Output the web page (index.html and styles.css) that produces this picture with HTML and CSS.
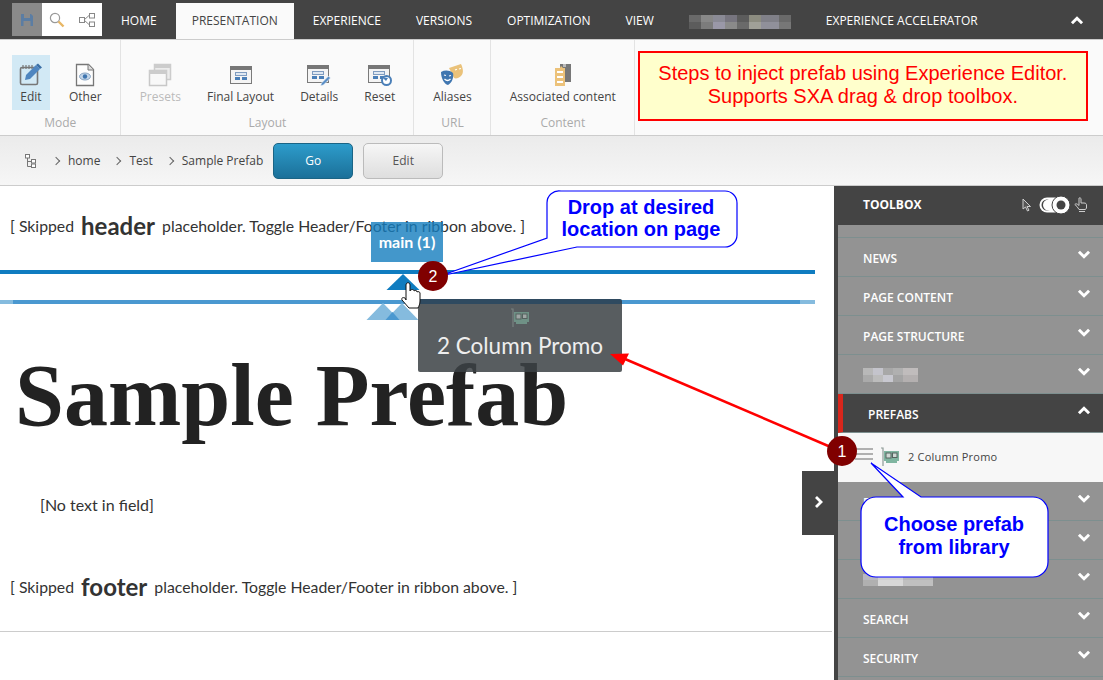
FILE: index.html
```html
<!DOCTYPE html>
<html lang="en">
<head>
  <meta charset="UTF-8">
  <title>Experience Editor</title>
  <link rel="stylesheet" href="styles.css">
</head>
<body>

  <svg class="defs" width="0" height="0">
    <symbol id="win" viewBox="0 0 22 18">
      <rect x="0.5" y="0.5" width="21" height="17" fill="#f4f4f4" stroke="#7a7a7a"/>
      <rect x="0" y="0" width="22" height="4" fill="#777"/>
      <rect x="5.5" y="6.5" width="11" height="3" fill="#dfe8f2" stroke="#7f9cc0"/>
      <rect x="5" y="11" width="5" height="3" fill="#4a7fb8"/>
      <rect x="12" y="11" width="5" height="3" fill="#4a7fb8"/>
    </symbol>
    <symbol id="card" viewBox="0 0 20 20">
      <path d="M1 1h2v18" fill="none" stroke="#8d9a96" stroke-width="1.2"/>
      <path d="M4 4h15v10h-2v2h-11v-2h-2z" fill="#7fb5a0"/>
      <rect x="6" y="6" width="5" height="5" fill="#cfd8d4" stroke="#56645f"/>
      <rect x="12.5" y="6" width="4.5" height="4.5" fill="#cfd8d4" stroke="#56645f"/>
    </symbol>
    <symbol id="chev" viewBox="0 0 12 8">
      <path d="M1.5 1.5l4.5 4.5 4.5-4.5" fill="none" stroke="#fff" stroke-width="2.6"/>
    </symbol>
  </svg>

  <div class="topbar">
    <div class="quick">
      <span class="quick-btn save">
        <svg width="12" height="12" viewBox="0 0 12 12"><path d="M0 0h10l2 2v10H0z" fill="#5b7da3"/><rect x="3" y="0" width="6" height="4" fill="#8a8a8a"/><rect x="2.500" y="7" width="7" height="5" fill="#8a8a8a"/></svg>
      </span>
      <span class="quick-btn">
        <svg width="16" height="16" viewBox="0 0 16 16"><circle cx="6" cy="6" r="4.6" fill="#fff" stroke="#999" stroke-width="1.2"/><path d="M9.500 9.500l5 5" stroke="#e8b765" stroke-width="2.400"/></svg>
      </span>
      <span class="quick-btn">
        <svg width="16" height="14" viewBox="0 0 16 14"><path d="M5 7l5-4.500M5 7l5 4.500" stroke="#888" fill="none"/><rect x="0.500" y="4.500" width="5" height="5" fill="#fff" stroke="#888"/><rect x="10.500" y="0.500" width="5" height="4.500" fill="#fff" stroke="#888"/><rect x="10.500" y="9" width="5" height="4.500" fill="#fff" stroke="#888"/></svg>
      </span>
    </div>
    <nav class="tabs">
      <a class="tab">HOME</a>
      <a class="tab active">PRESENTATION</a>
      <a class="tab">EXPERIENCE</a>
      <a class="tab">VERSIONS</a>
      <a class="tab">OPTIMIZATION</a>
      <a class="tab">VIEW</a>
      <a class="tab"><span class="blur blur-dark"></span></a>
      <a class="tab">EXPERIENCE ACCELERATOR</a>
    </nav>
    <svg class="collapse" width="14" height="9"><use href="#chev" transform="matrix(1 0 0 -1 0 9)"/></svg>
  </div>

  <div class="ribbon">
    <section class="group group-mode">
      <div class="items">
        <div class="item selected">
          <svg class="icon" width="24" height="24" viewBox="0 0 24 24">
            <rect x="1.500" y="4.500" width="17" height="17" rx="1.500" fill="none" stroke="#777" stroke-width="1.600"/>
            <path d="M4 2v4M7 2v4M10 2v4M13 2v4" stroke="#777" stroke-width="1.200"/>
            <path d="M17 2l4 4-10 10-5 1 1-5z" fill="#4f86c0"/>
            <path d="M17 2l2-1.500 4 4-2 1.500z" fill="#3a6ea5"/>
          </svg>
          <span>Edit</span>
        </div>
        <div class="item">
          <svg class="icon" width="20" height="24" viewBox="0 0 20 24">
            <path d="M1.500 1.500h12l5 5v16h-17z" fill="#fdfdfd" stroke="#777" stroke-width="1.300"/>
            <path d="M13 1.500v5.500h5.500" fill="#ddd" stroke="#777"/>
            <ellipse cx="10" cy="13.500" rx="5.500" ry="3.500" fill="#c3d5e8" stroke="#8aa6c4"/>
            <circle cx="10" cy="13.500" r="2.200" fill="#3f76b0"/>
          </svg>
          <span>Other</span>
        </div>
      </div>
      <h3>Mode</h3>
    </section>

    <section class="group">
      <div class="items">
        <div class="item disabled">
          <svg class="icon" width="24" height="24" viewBox="0 0 24 24">
            <rect x="6.500" y="1.500" width="16" height="15" fill="#ececec" stroke="#ccc" stroke-width="1.500"/>
            <rect x="6" y="1" width="17" height="4" fill="#ccc"/>
            <rect x="1.500" y="7.500" width="17" height="15" fill="#f8f8f8" stroke="#c8c8c8" stroke-width="1.500"/>
            <rect x="1" y="7" width="18" height="4" fill="#ccc"/>
          </svg>
          <span>Presets</span>
        </div>
        <div class="item">
          <svg class="icon" width="22" height="24" viewBox="0 0 22 24"><use href="#win" y="3" width="22" height="18"/></svg>
          <span>Final Layout</span>
        </div>
        <div class="item">
          <svg class="icon" width="24" height="24" viewBox="0 0 24 24">
            <use href="#win" x="0" y="2" width="22" height="18"/>
            <path d="M21.500 13l2 2-7 7-3 1 1-3z" fill="#5a8fc6" stroke="#fff" stroke-width="0.600"/>
          </svg>
          <span>Details</span>
        </div>
        <div class="item">
          <svg class="icon" width="24" height="24" viewBox="0 0 24 24">
            <use href="#win" x="0" y="2" width="22" height="18"/>
            <circle cx="18.500" cy="17.500" r="4.500" fill="#fff" stroke="#4a7fb8" stroke-width="2"/>
            <path d="M14 14l6 1-2 3z" fill="#4a7fb8"/>
          </svg>
          <span>Reset</span>
        </div>
      </div>
      <h3>Layout</h3>
    </section>

    <section class="group">
      <div class="items">
        <div class="item">
          <svg class="icon" width="24" height="22" viewBox="0 0 24 22">
            <path d="M9 4l12-4c2 4 3 9 0 12-2 2-5 3-7 2z" fill="#eac27a"/>
            <path d="M1 8c4-2 8-2 12 1 1 4-1 10-5 12-4-1-7-7-7-13z" fill="#3f76b0"/>
            <path d="M4 11l2 .5M9 12l2-.5M4.500 15c2 2 4 2 6 0" stroke="#fff" stroke-width="1.200" fill="none"/>
            <path d="M15 6l2-.7M19 5l2-.5" stroke="#fff" stroke-width="1.200"/>
          </svg>
          <span>Aliases</span>
        </div>
      </div>
      <h3>URL</h3>
    </section>

    <section class="group">
      <div class="items">
        <div class="item">
          <svg class="icon" width="18" height="24" viewBox="0 0 18 24">
            <path d="M6 1h11v18H6z" fill="#777"/>
            <path d="M9 1h3v3H9z" fill="#bbb"/>
            <path d="M1 5h5l1-2 2 2h2v18H1z" fill="#ecc27a"/>
            <path d="M3 9h6M3 14h6M3 19h6" stroke="#fff" stroke-width="2"/>
          </svg>
          <span>Associated content</span>
        </div>
      </div>
      <h3>Content</h3>
    </section>

    <aside class="note">Steps to inject prefab using Experience Editor.<br>Supports SXA drag &amp; drop toolbox.</aside>
  </div>

  <div class="crumbs">
    <svg class="tree" width="11" height="14" viewBox="0 0 11 14"><path d="M2.500 4v8.500H6M2.500 7.500H6" fill="none" stroke="#777"/><rect x="0.500" y="0.500" width="4" height="3.500" fill="#fff" stroke="#777"/><rect x="6.500" y="5.500" width="4" height="3.500" fill="#fff" stroke="#777"/><rect x="6.500" y="10" width="4" height="3.500" fill="#fff" stroke="#777"/></svg>
    <span class="crumb">home</span>
    <span class="crumb">Test</span>
    <span class="crumb">Sample Prefab</span>
    <button class="btn btn-go">Go</button>
    <button class="btn btn-edit">Edit</button>
  </div>

  <div class="main">
    <div class="content">
      <p class="skipped">[ Skipped <b>header</b> placeholder. Toggle Header/Footer in ribbon above. ]</p>
      <div class="drop-line"></div>
      <div class="drop-line next"></div>
      <h1>Sample Prefab</h1>
      <p class="no-text">[No text in field]</p>
      <p class="skipped footer">[ Skipped <b>footer</b> placeholder. Toggle Header/Footer in ribbon above. ]</p>
      <hr>
    </div>

    <div class="toolbox">
      <div class="toolbox-head">
        <span>TOOLBOX</span>
        <div class="mode-switch">
          <svg class="pointer" width="10" height="14" viewBox="0 0 10 14"><path d="M1 1v10l2.500-2 2 4 1.500-.8-2-3.700h3.500z" fill="#555" stroke="#ccc"/></svg>
          <svg width="34" height="20" viewBox="0 0 34 20"><rect x="1.500" y="2.500" width="30" height="15" rx="7.500" fill="#fff"/><circle cx="9" cy="10" r="5.500" fill="#444"/><circle cx="10.500" cy="10" r="5.500" fill="#fff"/><circle cx="23" cy="10" r="9" fill="#fff" stroke="#444"/><circle cx="23" cy="10" r="4.500" fill="#444"/></svg>
          <svg width="13" height="15" viewBox="0 0 13 15"><path d="M5 1c1-.5 2 0 2 1v4h3c2 0 2.500 1 2.500 2v3l-1 1.500H5L3 9.500 .8 7.500c1-1 2-.8 3 0L5 8.500z" fill="#444" stroke="#ccc"/><path d="M5 14.500h6" stroke="#ccc"/></svg>
        </div>
      </div>
      <div class="acc-top"></div>
      <div class="acc-row"><span>NEWS</span><svg width="14" height="9"><use href="#chev"/></svg></div>
      <div class="acc-row"><span>PAGE CONTENT</span><svg width="14" height="9"><use href="#chev"/></svg></div>
      <div class="acc-row"><span>PAGE STRUCTURE</span><svg width="14" height="9"><use href="#chev"/></svg></div>
      <div class="acc-row"><span class="blur blur-light"></span><svg width="14" height="9"><use href="#chev"/></svg></div>
      <div class="acc-row open"><span>PREFABS</span><svg width="14" height="9"><use href="#chev" transform="matrix(1 0 0 -1 0 9)"/></svg></div>
      <div class="acc-body">
        <svg class="grip" width="18" height="14" viewBox="0 0 18 14"><path d="M0 2h18M0 7h18M0 12h18" stroke="#999" stroke-width="1.500"/></svg>
        <svg width="20" height="20"><use href="#card" width="20" height="20"/></svg>
        <span>2 Column Promo</span>
      </div>
      <div class="acc-row"><span>PROMOS</span><svg width="14" height="9"><use href="#chev"/></svg></div>
      <div class="acc-row"><svg width="14" height="9"><use href="#chev"/></svg></div>
      <div class="acc-row"><span class="blur blur-wide"></span><svg width="14" height="9"><use href="#chev"/></svg></div>
      <div class="acc-row"><span>SEARCH</span><svg width="14" height="9"><use href="#chev"/></svg></div>
      <div class="acc-row"><span>SECURITY</span><svg width="14" height="9"><use href="#chev"/></svg></div>
    </div>
  </div>

  <!-- things dragged over the page -->
  <div class="ph-tag">main (1)</div>
  <svg class="markers" width="70" height="50" viewBox="0 0 70 50">
    <path d="M20 0l16.500 16h-33z" fill="#0f7cc0"/>
    <path d="M0 29l16.500 17h-33z" fill="#85bbde"/>
    <path d="M19 29l16.500 17h-33z" fill="#85bbde"/>
    <path d="M9.500 38l7 8h-14z" fill="#4a98d0"/>
  </svg>
  <div class="drag-tip">
    <svg width="20" height="20"><use href="#card" width="20" height="20"/></svg>
    <span>2 Column Promo</span>
  </div>
  <button class="side-toggle">
    <svg width="9" height="14" viewBox="0 0 9 14"><path d="M2 2l5 5-5 5" fill="none" stroke="#fff" stroke-width="2.800"/></svg>
  </button>

  <!-- screenshot annotations -->
  <svg class="annot" width="1103" height="680" viewBox="0 0 1103 680">
    <path d="M406 294c0-3 4-3 4 0v6c1-2 4-2 4 0 1-1 3-1 3 1 1-1 3 0 3 1v8c0 3-1 5-2 7h-9l-7-8c-1-2 1-3 3-2l1 2z" fill="#fff" stroke="#111" transform="translate(0 -9)"/>
    <path d="M840 451L625 359" stroke="#f00" stroke-width="2.500"/>
    <path d="M610 354l19-.5-6 12z" fill="#f00"/>

    <path d="M561 191h164a12 12 0 0 1 12 12v32a12 12 0 0 1-12 12H577L440 276 547 238V203a12 12 0 0 1 14-12z" fill="#fff" stroke="#00f" stroke-width="1.200"/>
    <text class="callout-text" x="641" y="214">Drop at desired</text>
    <text class="callout-text" x="641" y="236">location on page</text>

    <path d="M876 497h27L871 463l50 34h112a15 15 0 0 1 15 15v50a15 15 0 0 1-15 15H876a15 15 0 0 1-15-15v-50a15 15 0 0 1 15-15z" fill="#fff" stroke="#00f" stroke-width="1.200"/>
    <text class="callout-text" x="954" y="531">Choose prefab</text>
    <text class="callout-text" x="954" y="554">from library</text>

    <circle cx="433" cy="276" r="15" fill="#800000"/>
    <text class="badge-text" x="433" y="282">2</text>
    <circle cx="842" cy="451" r="15" fill="#800000"/>
    <text class="badge-text" x="842" y="457">1</text>
  </svg>

</body>
</html>
```

FILE: styles.css
```css
* {
  box-sizing: border-box;
}

html, body {
  margin: 0;
  height: 680px;
  overflow: hidden;
}

body {
  position: relative;
  background: #fff;
  font-family: 'Open Sans', sans-serif;
  color: #333;
}

.defs {
  position: absolute;
}

/* top bar */
.topbar {
  display: flex;
  height: 40px;
  padding: 3px 0 0 12px;
  background: #444;
  border-bottom: 1px solid #ccc;
}

.quick {
  display: flex;
  width: 90px;
  height: 33px;
  background: #fff;
}

.quick-btn {
  width: 30px;
  display: flex;
  align-items: center;
  justify-content: center;
}

.save {
  background: #8a8a8a;
}

.tabs {
  display: flex;
  gap: 3px;
  margin-left: 3px;
}

.tab {
  padding: 0 16px;
  height: 36px;
  line-height: 35px;
  font-size: 12px;
  color: #fff;
  white-space: nowrap;
}

.tab.active {
  background: #fafafa;
  color: #444;
}

.collapse {
  margin: 13px 0 0 76px;
}

.blur {
  display: inline-block;
  vertical-align: middle;
  background-size: 100% 50%;
  background-repeat: no-repeat;
  background-position: 0 0, 0 100%;
}

.blur-dark {
  width: 102px;
  height: 14px;
  background-image:
    linear-gradient(90deg, #6a6a6a 0 12px, #888 12px 24px, #8a8a95 24px 36px, #77757f 36px 48px, #5c5c5c 48px 60px, #8c8c80 60px 72px, #808088 72px 90px, #6a6a6a 90px),
    linear-gradient(90deg, #5c5c5c 0 12px, #7c7c7c 12px 24px, #9a98a8 24px 36px, #8a8a8a 36px 48px, #6a6a6a 48px 60px, #a0a098 60px 72px, #90909a 72px 90px, #777 90px);
}

.blur-light {
  width: 55px;
  height: 14px;
  background-image:
    linear-gradient(90deg, #b8b8b8 0 10px, #c4c4cc 10px 20px, #a8a8a8 20px 30px, #b0b0b0 30px 40px, #c0bcbc 40px),
    linear-gradient(90deg, #aaa 0 10px, #bcbcbc 10px 20px, #c8c8d0 20px 30px, #a4a4a4 30px 40px, #b4b0b0 40px);
}

.blur-wide {
  width: 70px;
  height: 12px;
  background-image:
    linear-gradient(90deg, #b8b8c0 0 15px, #d0d0d0 15px 40px, #b8b8b8 40px),
    linear-gradient(90deg, #b0b0b0 0 15px, #d8d8d8 15px 40px, #c0c0c0 40px);
}

/* ribbon */
.ribbon {
  display: flex;
  height: 96px;
  background: #fafafa;
  border-bottom: 1px solid #ccc;
}

.group {
  display: flex;
  flex-direction: column;
  align-items: center;
  padding: 0 9px 0 10px;
  border-right: 1px solid #e3e3e3;
}

.items {
  display: flex;
  gap: 8px;
  height: 67px;
  padding-top: 15px;
}

.item {
  display: flex;
  flex-direction: column;
  align-items: center;
  height: 55px;
  padding: 8px 9px 0;
  font-size: 12px;
  color: #444;
  white-space: nowrap;
}

.item span {
  margin-top: 2px;
  line-height: 16px;
}

.item .icon {
  height: 24px;
  flex: none;
}

.item.selected {
  margin: 0 2px;
  padding: 8px 7px 0;
  background: #d2e9f5;
}

.item.disabled {
  color: #bbb;
}

.group h3 {
  margin: 8px 0 0;
  font-size: 12px;
  font-weight: 400;
  color: #aaa;
  line-height: 16px;
}

.note {
  width: 450px;
  height: 70px;
  margin: 11px 0 0 3px;
  background: #ffc;
  border: 2px solid #f00;
  color: #f00;
  font-family: 'Liberation Sans', sans-serif;
  font-size: 20px;
  line-height: 23px;
  text-align: center;
  padding-top: 9px;
}

/* breadcrumb row */
.crumbs {
  display: flex;
  align-items: center;
  height: 50px;
  padding-left: 25px;
  background: linear-gradient(#ebebeb, #f6f6f6);
  border-bottom: 1px solid #ccc;
  font-size: 12px;
  color: #444;
}

.tree {
  margin-right: 8px;
}

.crumb {
  margin-left: 9px;
  margin-right: 5px;
}

.crumb::before {
  content: "";
  display: inline-block;
  width: 5px;
  height: 5px;
  margin: 0 9px 1px 0;
  border-top: 1px solid #666;
  border-right: 1px solid #666;
  transform: rotate(45deg);
}

.btn {
  width: 80px;
  height: 36px;
  border-radius: 5px;
  font-family: inherit;
  font-size: 12px;
  margin-right: 10px;
}

.btn-go {
  margin-left: 5px;
  background: linear-gradient(#2d9ccb, #1b7099);
  border: 1px solid #1a6485;
  color: #fff;
}

.btn-edit {
  background: linear-gradient(#f6f6f6, #dedede);
  border: 1px solid #bbb;
  color: #555;
}

/* page area */
.main {
  display: flex;
  height: 494px;
}

.content {
  width: 834px;
  padding-right: 2px;
  overflow: hidden;
}

.skipped {
  margin: 26px 0 0 10px;
  height: 28px;
  line-height: 28px;
  font-family: Lato, sans-serif;
  font-size: 15.800px;
  white-space: nowrap;
}

.skipped b {
  margin: 0 3px;
  font-size: 24px;
  font-weight: 700;
  color: #333;
  vertical-align: -3px;
}

.drop-line {
  width: 815px;
  height: 4px;
  margin-top: 30px;
  background: #0f7cc0;
}

.drop-line.next {
  margin-top: 26px;
  background: linear-gradient(90deg, #85bbde 0 13px, #4a98d0 13px 800px, #85bbde 800px);
}

h1 {
  margin: 42px 0 0 15px;
  font-family: 'Liberation Serif', serif;
  font-size: 88px;
  line-height: 100px;
  font-weight: 700;
  color: #222;
  white-space: nowrap;
}

.no-text {
  margin: 49px 0 0 40px;
  font-family: Lato, sans-serif;
  font-size: 16px;
  line-height: 20px;
}

.skipped.footer {
  margin-top: 58px;
}

hr {
  margin: 30px 0 0;
  border: 0;
  border-top: 1px solid #ccc;
}

/* toolbox */
.toolbox {
  width: 269px;
  flex: none;
  border-left: 4px solid #444;
  background: #939393;
  overflow: hidden;
}

.toolbox-head {
  display: flex;
  align-items: center;
  justify-content: space-between;
  height: 39px;
  margin-left: -4px;
  padding: 0 16px 2px 29px;
  background: #444;
  color: #fff;
  font-size: 12px;
  font-weight: 700;
}

.mode-switch {
  display: flex;
  align-items: center;
  gap: 2px;
}

.pointer {
  margin-right: 4px;
}

.acc-top {
  height: 13px;
  border-bottom: 1px solid #7d8f8f;
}

.acc-row {
  display: flex;
  align-items: center;
  justify-content: space-between;
  height: 39px;
  padding: 2px 12px 0 25px;
  border-bottom: 1px solid #7d8f8f;
  color: #fff;
  font-size: 12px;
  font-weight: 600;
}

.acc-row svg {
  margin: -8px 0 0 auto;
}

.acc-row.open {
  background: #444;
  border-left: 5px solid #d9261c;
  padding-left: 25px;
}

.acc-body {
  display: flex;
  align-items: center;
  height: 49px;
  padding: 0 0 2px 17px;
  background: #f7f7f7;
  color: #444;
  font-size: 11px;
}

.grip {
  margin: -6px 7px 0 0;
}

.acc-body span {
  margin-left: 8px;
  letter-spacing: 0.2px;
}

/* overlays */
.ph-tag {
  position: absolute;
  left: 371px;
  top: 222px;
  width: 72px;
  height: 40px;
  background: rgba(20, 125, 190, 0.8);
  color: #fff;
  font-family: Lato, sans-serif;
  font-size: 16px;
  font-weight: 700;
  line-height: 40px;
  text-align: center;
}

.markers {
  position: absolute;
  left: 383px;
  top: 274px;
  overflow: visible;
}

.drag-tip {
  position: absolute;
  left: 418px;
  top: 299px;
  width: 204px;
  height: 73px;
  display: flex;
  flex-direction: column;
  align-items: center;
  padding-top: 7px;
  background: rgba(60, 66, 70, 0.86);
  border-top: 5px solid #2f4a60;
  border-radius: 2px;
  color: #eee;
  font-family: Lato, sans-serif;
  font-size: 22.500px;
}

.drag-tip svg {
  opacity: 0.6;
  margin-top: -3px;
}

.drag-tip span {
  margin-top: 4px;
  line-height: 28px;
}

.side-toggle {
  position: absolute;
  left: 802px;
  top: 471px;
  width: 32px;
  height: 64px;
  padding: 0;
  background: #444;
  border: 0;
}

.annot {
  position: absolute;
  left: 0;
  top: 0;
  pointer-events: none;
}

.callout-text {
  font-family: 'Liberation Sans', sans-serif;
  font-size: 20px;
  font-weight: 700;
  fill: #00f;
  text-anchor: middle;
}

.badge-text {
  font-family: 'Liberation Sans', sans-serif;
  font-size: 16px;
  fill: #fff;
  text-anchor: middle;
}
```
